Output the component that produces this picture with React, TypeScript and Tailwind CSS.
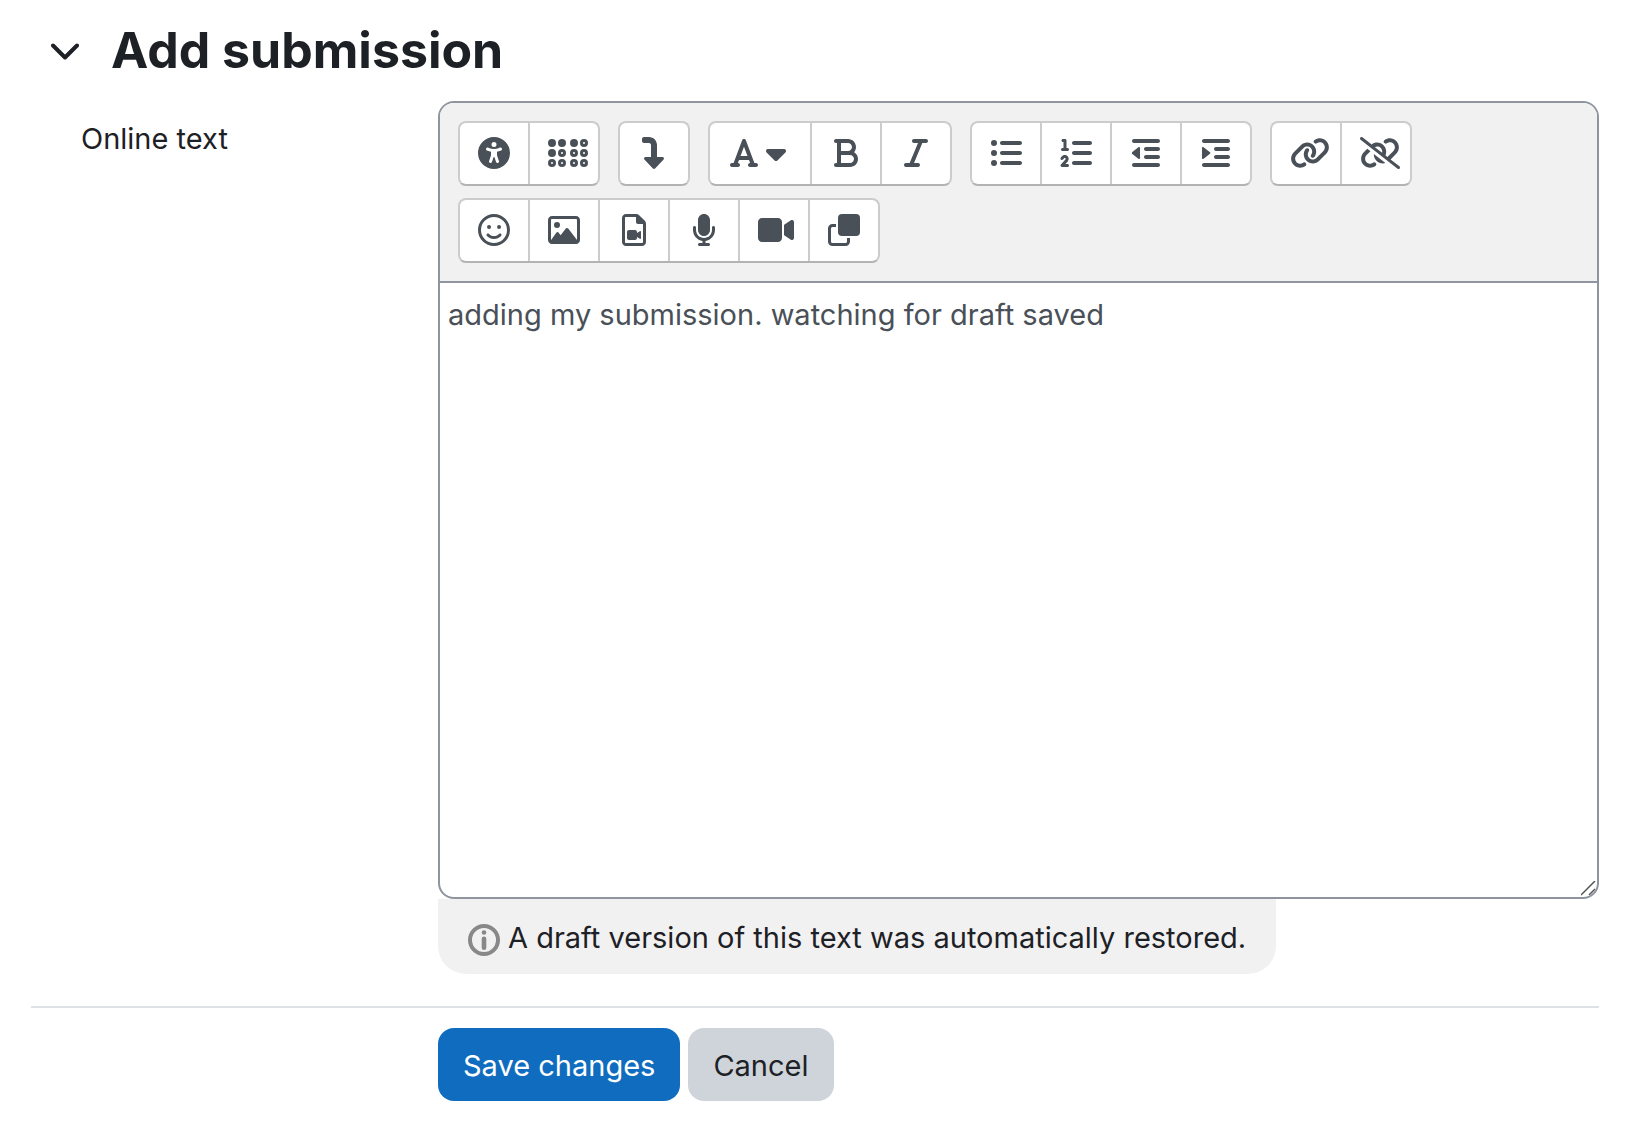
import type { ReactNode } from "react";
import {
  FaBold,
  FaBraille,
  FaCaretDown,
  FaFont,
  FaIndent,
  FaItalic,
  FaLink,
  FaLinkSlash,
  FaListOl,
  FaListUl,
  FaMicrophone,
  FaOutdent,
  FaRegFaceSmile,
  FaRegFileVideo,
  FaRegImage,
  FaTurnDown,
  FaUniversalAccess,
  FaVideo,
} from "react-icons/fa6";

type Tool = { label: string; icon: ReactNode; wide?: boolean };

function FilesIcon() {
  return (
    <svg viewBox="0 0 32 32" className="size-8" aria-hidden="true">
      <rect x="10" width="22" height="22" rx="4" fill="currentColor" />
      <path
        d="M8 11.5H4.5a3 3 0 0 0-3 3v13a3 3 0 0 0 3 3h13a3 3 0 0 0 3-3V24"
        fill="none"
        stroke="currentColor"
        strokeWidth="3"
      />
    </svg>
  );
}

function InfoIcon() {
  return (
    <svg viewBox="0 0 32 32" className="mt-1 size-8 shrink-0 text-[#888]" aria-hidden="true">
      <circle cx="16" cy="16" r="14" fill="none" stroke="currentColor" strokeWidth="4" />
      <circle cx="16" cy="8.5" r="2.3" fill="currentColor" />
      <rect x="13.7" y="12.5" width="4.6" height="13.5" rx="2.3" fill="currentColor" />
    </svg>
  );
}

const toolGroups: Tool[][] = [
  [
    { label: "Accessibility checker", icon: <FaUniversalAccess /> },
    { label: "Screenreader helper", icon: <FaBraille className="w-10" /> },
  ],
  [{ label: "Show more buttons", icon: <FaTurnDown /> }],
  [
    {
      label: "Paragraph styles",
      wide: true,
      icon: (
        <>
          <FaFont className="w-7" />
          <FaCaretDown className="w-5" />
        </>
      ),
    },
    { label: "Bold", icon: <FaBold /> },
    { label: "Italic", icon: <FaItalic /> },
  ],
  [
    { label: "Unordered list", icon: <FaListUl /> },
    { label: "Ordered list", icon: <FaListOl /> },
    { label: "Outdent", icon: <FaOutdent className="w-7" /> },
    { label: "Indent", icon: <FaIndent /> },
  ],
  [
    { label: "Link", icon: <FaLink className="w-10" /> },
    { label: "Unlink", icon: <FaLinkSlash className="w-10" /> },
  ],
  [
    { label: "Emoji picker", icon: <FaRegFaceSmile /> },
    { label: "Insert or edit image", icon: <FaRegImage /> },
    { label: "Insert or edit an audio/video file", icon: <FaRegFileVideo /> },
    { label: "Record audio", icon: <FaMicrophone /> },
    { label: "Record video", icon: <FaVideo className="w-9" /> },
    { label: "Manage files", icon: <FilesIcon /> },
  ],
];

function ToolGroup({ tools }: { tools: Tool[] }) {
  return (
    <div
      role="group"
      className="flex h-[65px] divide-x-2 divide-[#ccc] overflow-hidden rounded-lg border-2 border-[#ccc] border-b-[#b3b3b3] bg-white"
    >
      {tools.map((tool) => (
        <button
          key={tool.label}
          type="button"
          aria-label={tool.label}
          title={tool.label}
          className={`box-content flex items-center gap-2 pb-px text-[32px] [&>svg]:shrink-0 ${
            tool.wide ? "w-15 px-5" : "w-8 px-[18px] [justify-content:safe_center]"
          }`}
        >
          {tool.icon}
        </button>
      ))}
    </div>
  );
}

export default function App() {
  return (
    <main className="min-h-screen bg-white pr-7 pl-[31px] font-['Inter',sans-serif] text-[29px] leading-[45px] text-[#1d2125]">
      <form onSubmit={(e) => e.preventDefault()}>
        <div className="flex h-[101px] items-center gap-8 pb-px pl-5">
          <button type="button" aria-label="Collapse Add submission" aria-expanded="true" className="mt-1">
            <svg
              viewBox="0 0 28 18"
              className="h-[18px] w-7"
              fill="none"
              stroke="currentColor"
              strokeWidth="4"
              strokeLinecap="round"
              strokeLinejoin="round"
            >
              <path d="M2 2.5 14 14.5 26 2.5" />
            </svg>
          </button>
          <h3 className="text-[50px] leading-[60px] font-bold">Add submission</h3>
        </div>

        <div className="flex">
          <label htmlFor="onlinetext" className="w-[407px] shrink-0 pt-[15px] pl-[50px]">
            Online text
          </label>

          <div className="min-w-0 flex-1">
            <div className="relative overflow-hidden rounded-2xl border-2 border-[#8f959e]">
              <div className="flex flex-wrap gap-x-[18px] gap-y-3 border-b-2 border-[#8f959e] bg-[#f1f1f1] p-[18px] text-[#495057]">
                {toolGroups.map((tools) => (
                  <ToolGroup key={tools[0].label} tools={tools} />
                ))}
              </div>
              <textarea
                id="onlinetext"
                defaultValue="adding my submission. watching for draft saved"
                className="block h-[614px] w-full resize-none px-2 py-[9px] text-[#495057] outline-none"
              />
              <svg
                viewBox="0 0 16 16"
                className="absolute right-0 bottom-0 size-4"
                fill="none"
                stroke="#555"
                strokeWidth="1.5"
                aria-hidden="true"
              >
                <path d="M0 14 14 0M8 14 14 8" />
              </svg>
            </div>

            <div className="flex w-fit items-center gap-2 rounded-b-[28px] bg-[#f1f1f1] px-[30px] pt-4 pb-[14px]">
              <InfoIcon />
              <span>A draft version of this text was automatically restored.</span>
            </div>
          </div>
        </div>

        <hr className="mt-8 mb-5 border-t-2 border-[#dee2e6]" />

        <div className="flex gap-2 pl-[407px]">
          <button type="submit" className="rounded-2xl bg-[#0f6cbf] px-[25px] pt-[15px] pb-[13px] text-white">
            Save changes
          </button>
          <button type="button" className="rounded-2xl bg-[#ced4da] px-[25px] pt-[15px] pb-[13px]">
            Cancel
          </button>
        </div>
      </form>
    </main>
  );
}
